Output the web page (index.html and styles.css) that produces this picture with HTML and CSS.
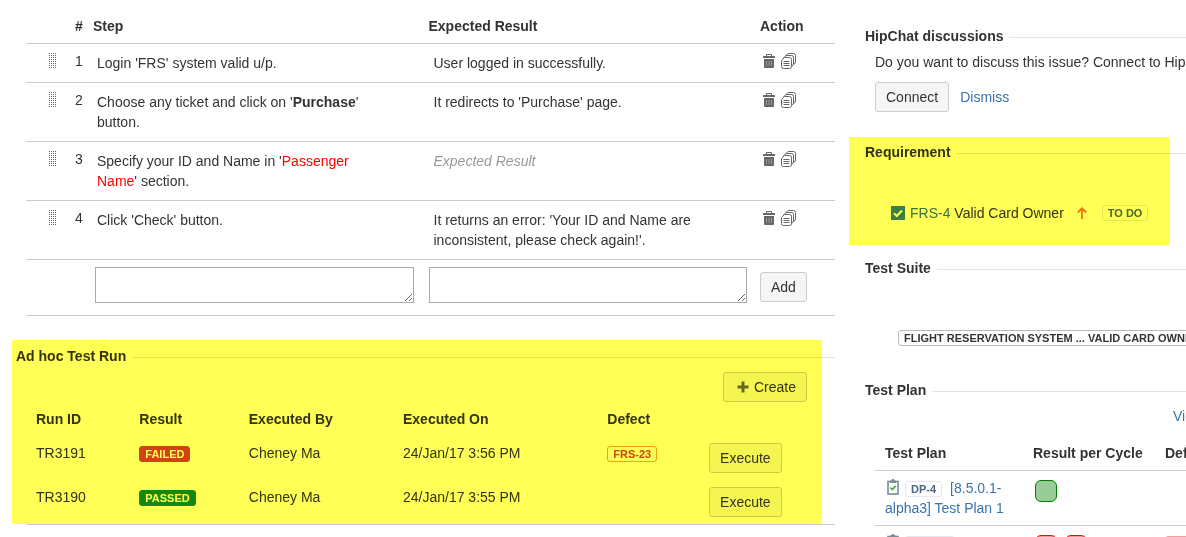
FILE: index.html
```html
<!DOCTYPE html>
<html lang="en">
<head>
  <meta charset="utf-8">
  <title>Test Case</title>
  <link rel="stylesheet" href="styles.css">
</head>
<body>
  <!-- shared icons -->
  <svg class="sprite" aria-hidden="true">
    <symbol id="trash" viewBox="0 0 12 16">
      <path d="M3.5 3V1.500h5V3" fill="none" stroke="#666" stroke-width="1"/>
      <rect x="0" y="3" width="12" height="2" rx="0.5" fill="#666"/>
      <path d="M1 6h10v8q0 1-1 1H2q-1 0-1-1z" fill="#666"/>
      <path d="M3.500 8v5M6 8v5M8.500 8v5" stroke="#aaa" stroke-width="0.8"/>
    </symbol>
    <symbol id="copy" viewBox="0 0 15 16">
      <g fill="#fff" stroke="#666" stroke-width="1">
        <path d="M7 .5h5.500q2 0 2 2v6.500q0 2-2 2H4.500V3z"/>
        <path d="M5 2.500h5.500q2 0 2 2V11q0 2-2 2H2.500V5z"/>
        <path d="M3.500 4.500h5q2 0 2 2v7q0 2-2 2h-6q-2 0-2-2v-6z"/>
        <path d="M2.500 8.500h6M2.500 10.500h6M2.500 12.500h6"/>
      </g>
    </symbol>
    <symbol id="plan" viewBox="0 0 12 16">
      <rect x="1" y="2.500" width="10" height="12.500" fill="#fff" stroke="#7b8b97" stroke-width="1.600"/>
      <path d="M3 1.500h1.500L5 0h2l.5 1.500H9V4H3z" fill="#7b8b97"/>
      <path d="M3.300 8.500l2 2 3.500-3.700" fill="none" stroke="#3fae49" stroke-width="1.700"/>
    </symbol>
  </svg>

  <div class="page">
    <main class="main">
      <table class="steps">
        <colgroup>
          <col class="c-drag">
          <col class="c-num">
          <col>
          <col>
          <col class="c-action">
        </colgroup>
        <thead>
          <tr>
            <th></th>
            <th class="num">#</th>
            <th>Step</th>
            <th class="expected">Expected Result</th>
            <th>Action</th>
          </tr>
        </thead>
        <tbody>
          <tr>
            <td class="drag"><span class="grip"></span></td>
            <td class="num">1</td>
            <td class="step">Login 'FRS' system valid u/p.</td>
            <td class="result">User logged in successfully.</td>
            <td class="action">
              <button type="button" aria-label="Delete"><svg class="i-trash"><use href="#trash"/></svg></button>
              <button type="button" aria-label="Clone"><svg class="i-copy"><use href="#copy"/></svg></button>
            </td>
          </tr>
          <tr>
            <td class="drag"><span class="grip"></span></td>
            <td class="num">2</td>
            <td class="step">Choose any ticket and click on '<b>Purchase</b>' button.</td>
            <td class="result">It redirects to 'Purchase' page.</td>
            <td class="action">
              <button type="button" aria-label="Delete"><svg class="i-trash"><use href="#trash"/></svg></button>
              <button type="button" aria-label="Clone"><svg class="i-copy"><use href="#copy"/></svg></button>
            </td>
          </tr>
          <tr>
            <td class="drag"><span class="grip"></span></td>
            <td class="num">3</td>
            <td class="step">Specify your ID and Name in '<span class="red">Passenger Name</span>' section.</td>
            <td class="result"><em>Expected Result</em></td>
            <td class="action">
              <button type="button" aria-label="Delete"><svg class="i-trash"><use href="#trash"/></svg></button>
              <button type="button" aria-label="Clone"><svg class="i-copy"><use href="#copy"/></svg></button>
            </td>
          </tr>
          <tr>
            <td class="drag"><span class="grip"></span></td>
            <td class="num">4</td>
            <td class="step">Click 'Check' button.</td>
            <td class="result">It returns an error: 'Your ID and Name are inconsistent, please check again!'.</td>
            <td class="action">
              <button type="button" aria-label="Delete"><svg class="i-trash"><use href="#trash"/></svg></button>
              <button type="button" aria-label="Clone"><svg class="i-copy"><use href="#copy"/></svg></button>
            </td>
          </tr>
          <tr class="new-step">
            <td></td>
            <td></td>
            <td class="new-text"><textarea aria-label="Step"></textarea></td>
            <td class="new-text"><textarea aria-label="Expected Result"></textarea></td>
            <td><button type="button" class="btn">Add</button></td>
          </tr>
        </tbody>
      </table>

      <section class="adhoc">
        <h2>Ad hoc Test Run</h2>
        <div class="toolbar">
          <button type="button" class="btn">
            <svg class="i-plus" viewBox="0 0 12 12"><path d="M6 0.500v11M0.500 6h11" stroke="#666" stroke-width="3"/></svg>
            Create
          </button>
        </div>
        <table class="runs">
          <thead>
            <tr>
              <th class="r-id">Run ID</th>
              <th class="r-result">Result</th>
              <th class="r-by">Executed By</th>
              <th class="r-on">Executed On</th>
              <th class="r-defect">Defect</th>
              <th></th>
            </tr>
          </thead>
          <tbody>
            <tr>
              <td>TR3191</td>
              <td><span class="badge failed">FAILED</span></td>
              <td>Cheney Ma</td>
              <td>24/Jan/17 3:56 PM</td>
              <td><span class="badge defect">FRS-23</span></td>
              <td><button type="button" class="btn">Execute</button></td>
            </tr>
            <tr>
              <td>TR3190</td>
              <td><span class="badge passed">PASSED</span></td>
              <td>Cheney Ma</td>
              <td>24/Jan/17 3:55 PM</td>
              <td></td>
              <td><button type="button" class="btn">Execute</button></td>
            </tr>
          </tbody>
        </table>
      </section>
    </main>

    <aside class="side">
      <section class="hipchat">
        <h2>HipChat discussions</h2>
        <p>Do you want to discuss this issue? Connect to HipChat</p>
        <div class="buttons">
          <button type="button" class="btn">Connect</button>
          <a href="#">Dismiss</a>
        </div>
      </section>

      <section class="requirement">
        <h2>Requirement</h2>
        <div class="issue">
          <svg class="i-task" viewBox="0 0 14 14"><rect width="14" height="14" fill="#3b7fc4"/><path d="M3 7.200l2.800 2.800L11 4.500" fill="none" stroke="#fff" stroke-width="2"/></svg>
          <span><a href="#">FRS-4</a> Valid Card Owner</span>
          <svg class="i-up" viewBox="0 0 10 12"><path d="M5 12V1.500M0.800 5.500L5 1.300l4.200 4.200" fill="none" stroke="#ee7711" stroke-width="1.800"/></svg>
          <span class="badge todo">TO DO</span>
        </div>
      </section>

      <section class="suite">
        <h2>Test Suite</h2>
        <span class="badge suite-name">FLIGHT RESERVATION SYSTEM ... VALID CARD OWNER</span>
      </section>

      <section class="plan">
        <h2>Test Plan</h2>
        <a class="view" href="#">View</a>
        <table class="plans">
          <thead>
            <tr>
              <th class="p-name">Test Plan</th>
              <th class="p-cycle">Result per Cycle</th>
              <th>Defects</th>
            </tr>
          </thead>
          <tbody>
            <tr>
              <td><svg class="i-plan"><use href="#plan"/></svg><span class="badge key">DP-4</span><a href="#">[8.5.0.1-alpha3] Test Plan 1</a></td>
              <td><span class="cycle pass"></span></td>
              <td></td>
            </tr>
            <tr>
              <td><svg class="i-plan"><use href="#plan"/></svg><span class="badge key blank"></span></td>
              <td><span class="cycle fail"></span><span class="cycle fail"></span></td>
              <td><span class="badge pink blank"></span></td>
            </tr>
          </tbody>
        </table>
      </section>
    </aside>
  </div>
</body>
</html>
```

FILE: styles.css
```css
* {
  box-sizing: border-box;
}

body {
  margin: 0;
  height: 100vh;
  overflow: hidden;
  background: #fff;
  color: #333;
  font-family: Arial, "Liberation Sans", sans-serif;
  font-size: 14px;
  line-height: 20px;
}

a {
  color: #3b73af;
  text-decoration: none;
}

svg {
  display: block;
}

.sprite {
  position: absolute;
  width: 0;
  height: 0;
}

table {
  border-collapse: collapse;
  table-layout: fixed;
  width: 100%;
}

th, td {
  padding: 0;
  text-align: left;
  vertical-align: top;
}

/* section titles with the rule running to the right */
h2 {
  display: flex;
  align-items: center;
  gap: 6px;
  margin: 0;
  font-size: 14px;
  line-height: 20px;
  white-space: nowrap;
}

h2::after {
  content: "";
  flex: 1;
  margin-top: 2px;
  border-top: 1px solid #e2e2e2;
}

.btn {
  height: 30px;
  padding: 0 10px;
  background: #f5f5f5;
  border: 1px solid #ccc;
  border-radius: 3px;
  color: #333;
  font: inherit;
}

.badge {
  display: inline-block;
  height: 16px;
  padding: 0 5px;
  border: 1px solid #ccc;
  border-radius: 3px;
  font-size: 11px;
  font-weight: bold;
  line-height: 14px;
  white-space: nowrap;
}

/* page columns */
.page {
  display: flex;
  gap: 14px;
  padding-left: 12px;
}

.main {
  flex: 1;
  min-width: 0;
}

.side {
  width: 337px;
  padding: 26px 0 0 16px;
}

/* steps table */
.steps {
  width: calc(100% - 14px);
  margin-left: 14px;
}

.steps tr {
  border-bottom: 1px solid #ccc;
}

.c-drag {
  width: 43px;
}

.c-num {
  width: 24px;
}

.c-action {
  width: 75px;
}

.steps th {
  padding: 16px 0 7px;
}

.steps .num {
  padding-left: 6px;
}

.steps .expected {
  padding-left: 2px;
}

.steps td.num {
  padding-top: 7px;
}

.drag {
  padding: 9px 0 0 22px;
}

.grip {
  display: block;
  width: 8px;
  height: 16px;
  background: conic-gradient(#666 25%, transparent 0) 0 0 / 2px 2px;
}

.step {
  padding: 9px 36px 9px 4px;
}

.result {
  padding: 9px 36px 9px 7px;
}

.result em {
  color: #999;
}

.red {
  color: #f00;
}

.action {
  padding: 9px 0 0 3px;
  font-size: 0;
}

.action button {
  margin-right: 6px;
  padding: 0;
  background: none;
  border: 0;
  vertical-align: top;
}

.i-trash {
  width: 12px;
  height: 16px;
}

.i-copy {
  width: 15px;
  height: 16px;
}

.new-step td {
  padding-top: 12px;
}

.new-step .new-text {
  padding: 7px 13px 12px 2px;
}

textarea {
  display: block;
  width: 100%;
  height: 36px;
  border: 1px solid #aaa;
  font: inherit;
}

/* highlighted sections */
.adhoc,
.requirement {
  position: relative;
}

.adhoc::after,
.requirement::after {
  content: "";
  position: absolute;
  inset: 0;
  background: #ff5;
  mix-blend-mode: multiply;
  pointer-events: none;
}

/* ad hoc runs */
.adhoc {
  margin-top: 24px;
  padding-top: 6px;
}

.adhoc::after {
  right: 13px;
}

.adhoc::before {
  content: "";
  position: absolute;
  left: 14px;
  right: 0;
  top: 100%;
  border-top: 1px solid #ccc;
}

.adhoc h2 {
  padding-left: 4px;
}

.toolbar {
  display: flex;
  justify-content: flex-end;
  margin: 6px 28px 7px 0;
}

.toolbar .btn {
  display: flex;
  align-items: center;
  gap: 5px;
  padding-left: 13px;
}

.i-plus {
  width: 12px;
  height: 12px;
}

.runs {
  width: calc(100% - 52px);
  margin-left: 24px;
}

.runs th,
.runs td {
  padding-bottom: 14px;
}

.runs tbody tr:last-child td {
  padding-bottom: 7px;
}

.runs .badge {
  vertical-align: middle;
}

.r-id { width: 13.4%; }
.r-result { width: 14.2%; }
.r-by { width: 20%; }
.r-on { width: 26.5%; }
.r-defect { width: 13.2%; }

.failed {
  background: #d04437;
  border-color: #d04437;
  color: #fff;
}

.passed {
  background: #14892c;
  border-color: #14892c;
  color: #fff;
}

.defect {
  border-color: #f0a030;
  color: #d04437;
}

/* right column */
.hipchat p {
  margin: 6px 0 10px;
  padding-left: 10px;
  white-space: nowrap;
}

.buttons {
  display: flex;
  align-items: center;
  gap: 11px;
  padding-left: 10px;
}

.requirement {
  height: 108px;
  margin: 25px 0 0 -16px;
  padding: 5px 0 0 16px;
}

.requirement::after {
  right: 16px;
}

.issue {
  display: flex;
  align-items: center;
  margin: 41px 0 0 26px;
}

.i-task {
  width: 14px;
  height: 14px;
  margin-right: 5px;
}

.i-up {
  width: 10px;
  height: 12px;
  margin: 0 15px 0 13px;
}

.todo {
  border-color: #e4e8ed;
  color: #4a6785;
}

.suite {
  margin-top: 13px;
}

.suite-name {
  display: block;
  width: max-content;
  margin: 52px 0 0 33px;
  border-color: #bbb;
}

.plan {
  margin-top: 34px;
}

.view {
  display: block;
  margin: 6px 0 17px 308px;
}

.plans {
  width: 380px;
  margin-left: 10px;
}

.plans tr {
  border-bottom: 1px solid #ccc;
}

.plans th {
  padding: 0 0 7px 10px;
}

.plans td {
  padding: 7px 10px;
}

.p-name { width: 148px; }
.p-cycle { width: 132px; }

.i-plan {
  display: inline-block;
  width: 12px;
  height: 16px;
  margin: -4px 6px 0 2px;
  vertical-align: middle;
}

.key {
  margin-right: 8px;
  border-color: #e4e8ed;
  color: #4a6785;
  vertical-align: middle;
}

.key.blank {
  width: 50px;
}

.pink {
  width: 50px;
  border-color: #f0a0a0;
  vertical-align: middle;
}

.cycle {
  display: inline-block;
  width: 22px;
  height: 22px;
  margin: 2px 6px 0 2px;
  border: 1px solid;
  border-radius: 6px;
  vertical-align: top;
}

.pass {
  background: #9c9;
  border-color: #008000;
}

.fail {
  background: #f99;
  border-color: #f00;
}
```
